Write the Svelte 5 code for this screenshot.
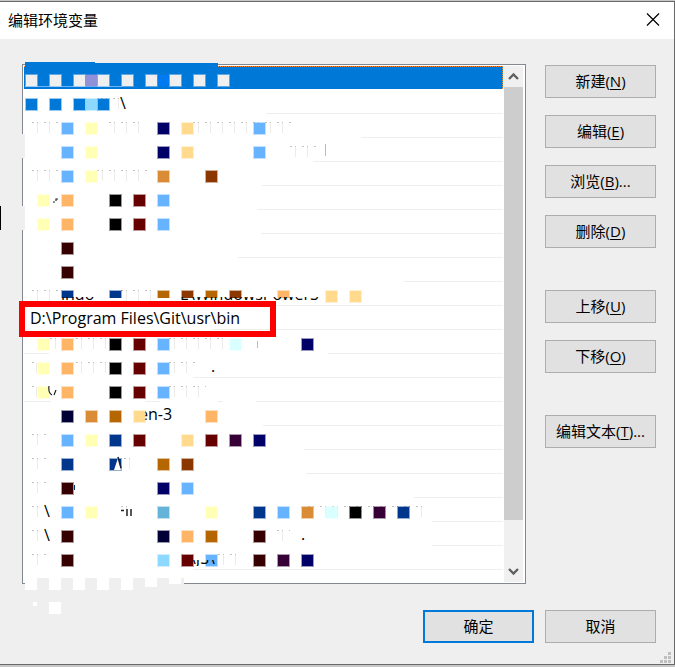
<script lang="ts">
	const blue = '#66b3ff';
	const accent = '#0078d7';
	const yellow = '#ffffb5';
	const navy = '#000066';
	const ink = '#000036';
	const sand = '#ffd98c';
	const peach = '#ffb566';
	const copper = '#d98c35';
	const ochre = '#b56600';
	const rust = '#8c3600';
	const wine = '#660000';
	const brown = '#360000';
	const plum = '#360036';
	const royal = '#00368c';
	const ice = '#d9ffff';
	const sky = '#8cd8ff';
	const grey = '#efefef';

	const cell = 12;
	const rowHeight = 24;

	type Row = {
		text?: string;
		// where the separator under the row starts, from the row's left edge
		from: number;
		// column -> colour of the blocks over the row
		blocks: Record<number, string>;
		// x ranges of leftover specks along the top of the blocks
		specks?: number[][];
	};

	const rows: Row[] = [
		{
			from: 0,
			blocks: { 0: grey, 2: grey, 4: grey, 5: '#9191d9', 6: grey, 8: grey, 10: grey, 11: '#007af0', 12: grey, 14: grey, 16: grey }
		},
		{ from: 242, blocks: { 0: accent, 2: accent, 4: accent, 5: sky, 6: accent }, specks: [[101, 122]] },
		{ from: 337, blocks: { 3: blue, 5: yellow, 11: navy, 13: sand, 19: blue }, specks: [[32, 60], [109, 140], [193, 292]] },
		{ from: 289, blocks: { 3: blue, 5: yellow, 11: navy, 13: sand, 19: blue }, specks: [[290, 318]] },
		{ from: 238, blocks: { 3: blue, 5: yellow, 11: copper, 15: rust }, specks: [[32, 60], [97, 148]] },
		{ from: 233, blocks: { 1: yellow, 3: peach, 7: '#000', 9: wine, 11: blue } },
		{ from: 237, blocks: { 1: yellow, 3: peach, 7: '#000', 9: wine, 11: blue } },
		{ from: 214, blocks: { 3: brown } },
		{ from: 380, blocks: { 3: brown } },
		{
			from: 252,
			blocks: { 3: royal, 7: royal, 11: ochre, 13: rust, 15: ochre, 17: rust, 21: peach, 25: sand, 27: sand },
			specks: [[32, 60], [121, 156]]
		},
		{ text: 'D:\\Program Files\\Git\\usr\\bin', from: 189, blocks: {} },
		{ from: 304, blocks: { 1: yellow, 3: peach, 7: '#000', 9: wine, 11: blue, 17: ice, 23: navy }, specks: [[50, 60], [76, 108], [169, 228]] },
		{ from: 169, blocks: { 1: yellow, 3: peach, 7: '#000', 9: wine, 11: blue }, specks: [[32, 36], [76, 108], [169, 196]] },
		{ from: 232, blocks: { 1: yellow, 3: peach, 7: '#000', 9: wine, 11: blue }, specks: [[32, 36], [169, 206]] },
		{ from: 239, blocks: { 3: ink, 5: copper, 7: ochre, 9: sand, 15: peach } },
		{ from: 280, blocks: { 3: blue, 5: yellow, 7: royal, 9: wine, 13: sand, 15: wine, 17: plum, 19: navy }, specks: [[32, 48]] },
		{ from: 282, blocks: { 3: royal, 7: royal, 11: ochre, 13: rust }, specks: [[32, 48], [124, 134]] },
		{ from: 390, blocks: { 3: brown, 11: navy, 13: blue }, specks: [[32, 48]] },
		{
			from: 408,
			blocks: { 3: blue, 5: yellow, 11: '#66b3d9', 15: yellow, 19: royal, 21: blue, 23: copper, 25: ice, 27: '#000', 29: plum, 31: royal },
			specks: [[32, 42], [121, 132], [308, 422]]
		},
		{ from: 408, blocks: { 3: brown, 11: ink, 13: peach, 15: ochre, 19: brown }, specks: [[32, 42], [277, 290]] },
		{ from: 169, blocks: { 3: brown, 11: sky, 13: wine, 15: blue, 19: brown, 21: plum, 23: navy }, specks: [[32, 48], [218, 240]] }
	];

	const actions = [
		[
			{ label: '新建', key: 'N' },
			{ label: '编辑', key: 'E' },
			{ label: '浏览', key: 'B', more: true },
			{ label: '删除', key: 'D' }
		],
		[
			{ label: '上移', key: 'U' },
			{ label: '下移', key: 'O' }
		],
		[{ label: '编辑文本', key: 'T', more: true }]
	];

	const blockX = (col: number) => 25 + col * cell;
	const blockY = (row: number) => 74 + row * rowHeight;

	let selected = $state(0);
</script>

<div class="window">
	<header>
		<h1>编辑环境变量</h1>
		<button class="close" aria-label="关闭">
			<svg width="14" height="14" viewBox="0 0 14 14">
				<path d="M1 0.500 L13 12.500 M13 0.500 L1 12.500" fill="none" stroke="#000" stroke-width="1.2" />
			</svg>
		</button>
	</header>

	<main>
		<div class="top">
			<div class="listbox">
				<ul>
					{#each rows as row, i}
						<li class:selected={selected === i} style="--from: {row.from}px">{row.text ?? ''}</li>
					{/each}
				</ul>
				<div class="scrollbar">
					<button aria-label="向上滚动">
						<svg width="11" height="9" viewBox="0 0 11 9">
							<path d="M1 7 L5.5 2.5 L10 7" fill="none" stroke="#606060" stroke-width="2.4" />
						</svg>
					</button>
					<div class="thumb"></div>
					<button aria-label="向下滚动">
						<svg width="11" height="9" viewBox="0 0 11 9">
							<path d="M1 2 L5.5 6.5 L10 2" fill="none" stroke="#606060" stroke-width="2.4" />
						</svg>
					</button>
				</div>

				<svg class="mosaic" width="480" height="560" viewBox="23 65 480 560" aria-hidden="true">
					<defs>
						<clipPath id="lower"><rect x="60" y="297" width="260" height="4" /></clipPath>
						<clipPath id="bottom"><rect x="190" y="560" width="30" height="6" /></clipPath>
					</defs>

					<!-- smeared edges of the list -->
					<rect x="25" y="62" width="70" height="12" fill={accent} />
					<rect x="95" y="63" width="123" height="12" fill={accent} />
					<rect x="25" y="86" width="97" height="1" fill={blue} />
					<rect x="22" y="134" width="3" height="24" fill={grey} />
					<rect x="22" y="206" width="3" height="24" fill={grey} />
					<rect x="0" y="206" width="1" height="24" fill="#000" />
					<rect x="25" y="578" width="159" height="6" fill={grey} />
					{#each [12, 12, 12, 12, 12, 9, 6] as height, i}
						<rect x={25 + i * 24} y="578" width="12" {height} fill="#fff" />
					{/each}
					<rect x="49" y="602" width="12" height="12" fill="#fff" />
					<rect x="33" y="602" width="4" height="4" fill="#fff" />
					<path d="M24 353.5 h25 M24 401.5 h27 M145 401.5 h15 M218 401.5 h5" stroke="#eee" />

					<text class="scrap" x="139" y="420">en-3</text>

					{#each rows as row, i}
						{#each row.specks ?? [] as [x1, x2]}
							<path d="M{x1} {blockY(i) + 0.5} H{x2}" stroke="#999" stroke-opacity="0.6" stroke-dasharray="2 3 1 6" />
							<path d="M{x1 + 5} {blockY(i) + 6} H{x2}" stroke="#ccc" stroke-opacity="0.4" stroke-width="10" stroke-dasharray="1 11" />
						{/each}
						{#each Object.entries(row.blocks) as [col, fill]}
							<rect
								x={blockX(+col)}
								y={blockY(i)}
								width="13"
								height={i === 9 && +col < 25 ? 8 : 13}
								{fill}
								fill-opacity="0.4"
							/>
							<rect
								x={blockX(+col) + 1}
								y={blockY(i) + 1}
								width="11"
								height={i === 9 && +col < 25 ? 7 : 11}
								{fill}
							/>
						{/each}
					{/each}

					<!-- what is left of the other paths -->
					<g class="scrap">
						<text x="120" y="109">\</text>
						<text x="44" y="517">\</text>
						<text x="44" y="541">\</text>
						<text x="301" y="540">.</text>
						<text x="211" y="372">.</text>
						<g clip-path="url(#lower)">
							<text x="61" y="300">indo</text>
							<text x="180" y="300">E\WindowsPowerS</text>
						</g>
						<text x="190" y="564" clip-path="url(#bottom)">\JS\</text>
					</g>
					<path d="M114 470 L118 458 L121 470 Z" fill="#fff" />
					<path d="M118 457 L121 468" stroke="#123" stroke-width="1.5" />
					<path d="M121 510.5 h3 M127 509 v7 M131 509 v7" stroke="#222" stroke-width="1.5" />
					<path d="M53 202 h2 M56 201 v-2 h2 M49 386 q-1 7 3 9 M54 395 l2 -5" fill="none" stroke="#222" stroke-width="1.2" />
					<path d="M74.5 485 v5" stroke="#036" />
					<path d="M325.5 144 v12 M257.5 341 v7" stroke="#b3b9d9" />

					<rect class="frame" x="22" y="304" width="251" height="30" />
				</svg>
			</div>

			<div class="actions">
				{#each actions as group}
					<div class="group">
						{#each group as action}
							<button class="push">{action.label}(<u>{action.key}</u>){action.more ? '...' : ''}</button>
						{/each}
					</div>
				{/each}
			</div>
		</div>

		<footer>
			<button class="push default">确定</button>
			<button class="push">取消</button>
		</footer>
	</main>

	<svg class="grip" width="11" height="11" viewBox="0 0 11 11" aria-hidden="true">
		<path d="M8 0h3v3h-3z M4 4h3v3h-3z M8 4h3v3h-3z M0 8h3v3h-3z M4 8h3v3h-3z M8 8h3v3h-3z" fill="#bfbfbf" />
	</svg>
</div>

<style>
	:global(body) {
		margin: 0;
		background: #c8c8c8;
	}

	.window {
		position: relative;
		margin: 1px 0 2px;
		border: 1px solid #696969;
		border-left: none;
		background: #efefef;
		color: #000;
		font-family: 'Open Sans', 'Noto Sans CJK SC', sans-serif;
		font-size: 15px;
	}

	header {
		box-sizing: border-box;
		display: flex;
		align-items: center;
		justify-content: space-between;
		height: 37px;
		padding: 0 14px 2px 8px;
		background: #fff;
	}

	h1 {
		margin: 0;
		font-size: 15px;
		font-weight: 400;
	}

	button {
		padding: 0;
		border: none;
		background: none;
		color: inherit;
		font: inherit;
	}

	.close {
		display: flex;
	}

	main {
		padding: 25px 18px 21px 22px;
	}

	.top {
		display: grid;
		grid-template-columns: 1fr 111px;
		gap: 19px;
	}

	.listbox {
		position: relative;
		display: grid;
		grid-template-columns: 1fr 20px;
		padding: 1px;
		border: 1px solid #828790;
		background: #fff;
	}

	ul {
		margin: 0;
		padding: 0 1px 12px 0;
		list-style: none;
	}

	li {
		box-sizing: border-box;
		height: 24px;
		padding-left: 6px;
		font-size: 16px;
		line-height: 24px;
		background: linear-gradient(#eee, #eee) no-repeat right bottom / calc(100% - var(--from)) 1px;
	}

	li.selected {
		border-bottom: 1px solid #fff;
		background:
			repeating-linear-gradient(90deg, #ff8728 0 1px, #0078d7 1px 2px) top / 100% 1px no-repeat,
			repeating-linear-gradient(#ff8728 0 1px, #0078d7 1px 2px) right / 1px 100% no-repeat,
			#0078d7;
	}

	.scrollbar {
		display: flex;
		flex-direction: column;
		border-right: 1px solid #fff;
		background: #f0f0f0;
	}

	.scrollbar button {
		display: flex;
		align-items: center;
		justify-content: center;
		height: 21px;
	}

	.thumb {
		flex: 1;
		margin-bottom: 41px;
		background: #cdcdcd;
	}

	.mosaic {
		position: absolute;
		top: 0;
		left: 0;
		overflow: visible;
		pointer-events: none;
	}

	.scrap {
		font-size: 16px;
	}

	.frame {
		fill: none;
		stroke: #f00;
		stroke-width: 6px;
	}

	.actions {
		display: flex;
		flex-direction: column;
		gap: 42px;
		padding-top: 1px;
	}

	.group {
		display: flex;
		flex-direction: column;
		gap: 17px;
	}

	.push {
		box-sizing: border-box;
		width: 111px;
		height: 33px;
		padding-bottom: 2px;
		border: 1px solid #adadad;
		background: #e1e1e1;
		white-space: nowrap;
	}

	.push u {
		text-underline-offset: 2px;
	}

	.default {
		border: 2px solid #0078d7;
	}

	footer {
		display: flex;
		justify-content: flex-end;
		gap: 11px;
		margin-top: 26px;
	}

	.grip {
		position: absolute;
		right: 3px;
		bottom: 1px;
	}
</style>
